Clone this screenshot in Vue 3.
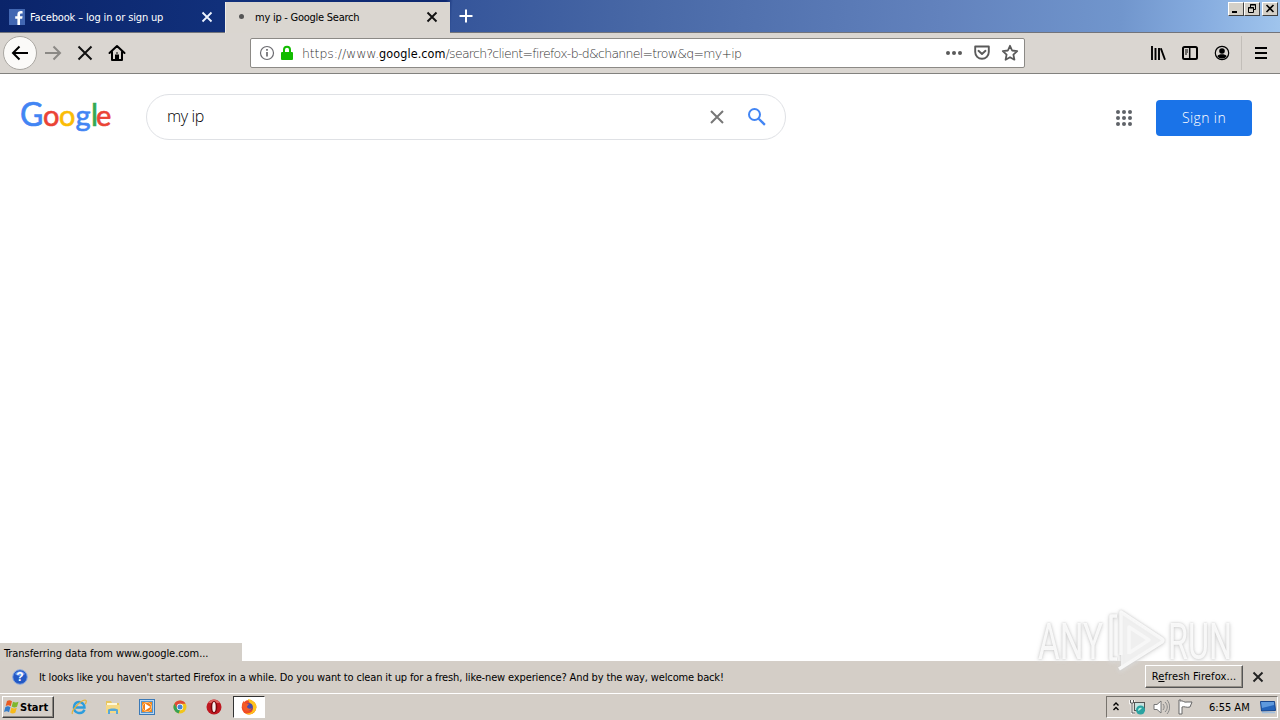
<script setup>
import { ref } from 'vue'

const query = ref('my ip')
const dots = [3, 9, 15]
</script>

<template>
    <div class="desktop">
        <header class="titlebar">
            <div class="tab">
                <svg class="favicon" width="16" height="16" viewBox="0 0 16 16">
                    <rect width="16" height="16" fill="#4267b2" />
                    <path d="M11 16V9.7h2.2l.4-2.4H11V6c0-.9.4-1.4 1.4-1.4h1.2V2.3C11 1.8 8.4 2.2 8.4 5.5v1.8H6.2v2.4h2.2V16z" fill="#fff" />
                </svg>
                <span class="tab-title">Facebook – log in or sign up</span>
                <svg class="close" width="12" height="12" viewBox="0 0 12 12"><path d="M1.5 1.5l9 9m0-9l-9 9" stroke="#eef4ff" stroke-width="1.8" /></svg>
            </div>
            <div class="tab active">
                <i class="loading"></i>
                <span class="tab-title">my ip - Google Search</span>
                <svg class="close" width="12" height="12" viewBox="0 0 12 12"><path d="M1.5 1.5l9 9m0-9l-9 9" stroke="#111" stroke-width="1.9" /></svg>
            </div>
            <svg class="new-tab" width="16" height="16" viewBox="0 0 16 16"><path d="M8 1.5v13M1.5 8h13" stroke="#fff" stroke-width="2" /></svg>
            <div class="window-buttons">
                <button><svg width="14" height="12"><path d="M3 9h5" stroke="#000" stroke-width="2" /></svg></button>
                <button><svg width="14" height="12"><path d="M5.5 4V1.5h5v5H9M5 2h6M3.500 4.500h5v5h-5zM3 5h6" fill="none" stroke="#000" /></svg></button>
                <button class="x"><svg width="14" height="12"><path d="M3.5 2l7 7m0-7l-7 7" stroke="#000" stroke-width="1.6" /></svg></button>
            </div>
        </header>

        <nav class="toolbar">
            <div class="back">
                <svg width="18" height="18" viewBox="0 0 18 18"><path d="M17 9H2m6.5-6.5L2 9l6.5 6.5" fill="none" stroke="#000" stroke-width="2" /></svg>
            </div>
            <svg class="forward" width="18" height="18" viewBox="0 0 18 18"><path d="M1 9h15M9.5 2.5L16 9l-6.5 6.5" fill="none" stroke="#8b8985" stroke-width="2" /></svg>
            <svg class="stop" width="16" height="16" viewBox="0 0 16 16"><path d="M1.5 1.5l13 13m0-13l-13 13" stroke="#111" stroke-width="2" /></svg>
            <svg class="home" width="18" height="18" viewBox="0 0 18 18">
                <path d="M1.5 9L9 2l7.5 7M4 7.500V16h10V7.500" fill="none" stroke="#000" stroke-width="2" stroke-linejoin="round" stroke-linecap="round" />
                <path d="M7 16v-5.500h4V16z" />
                <path d="M9 8.500v1" stroke="#000" stroke-width="2" />
            </svg>
            <div class="urlbar">
                <svg class="info" width="16" height="16" viewBox="0 0 16 16">
                    <circle cx="8" cy="8" r="6.5" fill="none" stroke="#6b6b70" stroke-width="1.2" />
                    <path d="M8 7v4.500M8 4v1.800" stroke="#6b6b70" stroke-width="1.7" />
                </svg>
                <svg class="lock" width="14" height="16" viewBox="0 0 14 16">
                    <path d="M4 8V4.800a3 3 0 016 0V8" fill="none" stroke="#12bc00" stroke-width="2" />
                    <rect x="1" y="7" width="12" height="8" rx="1" fill="#12bc00" />
                </svg>
                <span class="url"><span class="host">https://www.</span><b>google.com</b>/search?client=firefox-b-d&amp;channel=trow&amp;q=my+ip</span>
                <svg class="more" width="18" height="6"><circle cx="3" cy="3" r="2" /><circle cx="9" cy="3" r="2" /><circle cx="15" cy="3" r="2" /></svg>
                <svg class="pocket" width="18" height="18" viewBox="0 0 18 18"><path d="M2.200 2.500h13.600V8a6.800 6.800 0 01-13.600 0zM5.500 6.800L9 10l3.500-3.200" fill="none" stroke="#5a5a5a" stroke-width="1.9" stroke-linejoin="round" stroke-linecap="round" /></svg>
                <svg class="star" width="18" height="18" viewBox="0 0 18 18"><path d="M9 1.800l2.100 4.700 5.100.6-3.800 3.500 1 5.100L9 13.200l-4.400 2.500 1-5.100-3.800-3.500 5.100-.6z" fill="none" stroke="#5a5a5a" stroke-width="1.8" stroke-linejoin="round" /></svg>
            </div>
            <div class="tools">
                <svg width="16" height="16" viewBox="0 0 16 16"><path d="M2 1v14M5.500 3v12M9 3v12" stroke="#000" stroke-width="1.9" /><path d="M10.800 3.200L15 14.800" stroke="#000" stroke-width="1.9" /></svg>
                <svg width="16" height="16" viewBox="0 0 16 16"><rect x="1" y="2" width="14" height="12" rx="1.5" fill="none" stroke="#000" stroke-width="2" /><path d="M7.700 2v12" stroke="#000" stroke-width="1.5" /><path d="M3 5h3M3 7h3M3 9h2" stroke="#000" /></svg>
                <svg width="16" height="16" viewBox="0 0 16 16"><circle cx="8" cy="8" r="6.7" fill="none" stroke="#000" stroke-width="1.2" /><circle cx="8" cy="6" r="2.8" /><path d="M3.300 11.200c1.500-2.500 7.900-2.500 9.400 0A5.500 5.500 0 018 13.500a5.500 5.500 0 01-4.700-2.300z" /></svg>
            </div>
            <svg class="menu" width="12" height="14"><path d="M0 2h12M0 7h12M0 12h12" stroke="#000" stroke-width="2" /></svg>
        </nav>

        <main class="page">
            <div class="logo">
                <span class="blue cap">G</span><span class="red">o</span><span class="yellow">o</span><span class="blue g">g</span><span class="green">l</span><span class="red e">e</span>
            </div>
            <div class="searchbox">
                <span class="query">{{ query }}</span>
                <svg class="clear" width="16" height="16" viewBox="0 0 16 16"><path d="M2 2l12 12m0-12L2 14" stroke="#777" stroke-width="2" /></svg>
                <svg class="magnifier" width="20" height="20" viewBox="0 0 20 20"><circle cx="7.5" cy="7.5" r="5.5" fill="none" stroke="#4285f4" stroke-width="2" /><path d="M11.700 11.700l6.200 6.200" stroke="#4285f4" stroke-width="2.3" /></svg>
            </div>
            <svg class="apps" width="18" height="18">
                <template v-for="y in dots" :key="y">
                    <circle v-for="x in dots" :key="x" :cx="x" :cy="y" r="2" fill="#5f6368" />
                </template>
            </svg>
            <button class="signin"><span>Sign in</span></button>
        </main>

        <div class="status"><span>Transferring data from www.google.com...</span></div>

        <div class="notification">
            <svg class="help" width="16" height="16" viewBox="0 0 16 16">
                <circle cx="8" cy="8" r="7.3" fill="#2459c5" stroke="#8aa9df" />
                <path d="M3 5a6 6 0 0110 0c-2 2-7 3-10 0z" fill="#6d9af0" />
                <text x="8" y="12" text-anchor="middle" fill="#fff">?</text>
            </svg>
            <span class="message">It looks like you haven't started Firefox in a while. Do you want to clean it up for a fresh, like-new experience? And by the way, welcome back!</span>
            <button class="refresh"><span>R<u>e</u>fresh Firefox...</span></button>
            <svg class="dismiss" width="12" height="12" viewBox="0 0 12 12"><path d="M1.500 1.500l9 9m0-9l-9 9" stroke="#222" stroke-width="1.9" /></svg>
        </div>

        <footer class="taskbar">
            <button class="start">
                <svg width="16" height="16" viewBox="0 0 16 16">
                    <path d="M3 2c2-1 3-1 5 .3L6.700 7.200C5 6 3.700 6 1.700 7z" fill="#ea5b20" />
                    <path d="M9 2.700c2 1.100 3.500 1 5.500 0L13 7.700c-2 1-3.500.9-5.300-.2z" fill="#7fb72d" />
                    <path d="M1.400 8c2-1 3.300-.9 5 .3L5 13.200C3.400 12 2 12 0 13z" fill="#347cc9" />
                    <path d="M7.400 8.600c1.800 1.100 3.400 1.200 5.400.2l-1.500 4.900c-2 1-3.500.9-5.200-.2z" fill="#f7ba19" />
                </svg>
                <span>Start</span>
            </button>
            <div class="launcher">
                <svg viewBox="0 0 16 16">
                    <path d="M13.500 10.700A5.500 5.500 0 118 3a5.400 5.400 0 015.500 5.500H4.500" fill="none" stroke="#2c9ddd" stroke-width="2.4" />
                    <path d="M1.500 15C-.5 12.500 9 1.500 14 1c2.200 0 1 3 .2 4.300" fill="none" stroke="#e4b23a" stroke-width="1.2" />
                </svg>
                <svg viewBox="0 0 16 16">
                    <path d="M1 2h5l1 2h7v9H1z" fill="#e8c65e" /><path d="M2 4h10v5H2z" fill="#fff8d8" />
                    <path d="M1 6h14v8H1z" fill="#f5d986" /><path d="M3 15v-4c0-2 10-2 10 0v4h-2v-3H5v3z" fill="#58a8d8" />
                </svg>
                <svg viewBox="0 0 16 16">
                    <rect x=".5" y=".5" width="15" height="15" fill="#b9d7f2" stroke="#3b79b6" />
                    <rect x="2.5" y="2.5" width="11" height="11" fill="#f68b1d" stroke="#5795cc" /><circle cx="8" cy="8" r="4.500" fill="#f37b12" stroke="#ffc785" /><path d="M6 4.500l5.500 3.500L6 11.500z" fill="#fff" />
                </svg>
                <svg viewBox="0 0 16 16">
                    <circle cx="8" cy="8" r="6.5" fill="#f1c51b" />
                    <path d="M2.400 4.700A6.500 6.500 0 0113.600 4.700H8L5 9.700z" fill="#df4938" />
                    <path d="M2.400 4.700l3 5 2.600 1.500-1.500 3.200A6.500 6.500 0 012.400 4.700z" fill="#36a154" />
                    <circle cx="8" cy="8" r="3.2" fill="#fff" /><circle cx="8" cy="8" r="2.5" fill="#4285d4" />
                </svg>
                <svg viewBox="0 0 16 16"><circle cx="8" cy="8" r="7.5" fill="#bf1720" /><path d="M2 4a7 7 0 0112 0" fill="#de6260" /><ellipse cx="8" cy="8" rx="3.3" ry="6" fill="#78060b" /><ellipse cx="8" cy="8" rx="1.7" ry="5" fill="#f5eeee" /></svg>
            </div>
            <div class="running">
                <svg width="16" height="16" viewBox="0 0 16 16">
                    <circle cx="8" cy="8.3" r="7.3" fill="#f14b23" />
                    <path d="M7 0c3 .5 8.500 3 8.500 8A7.500 7.500 0 014 14.300c5 1 8-1.500 8-5C12 5 8 5 7 0z" fill="#ffc31d" />
                    <circle cx="8" cy="8" r="3.8" fill="#484dac" />
                    <path d="M1 5L2.500 2l2 2.500L8 5 6 7.500c0 2 3 2.800 5 1.500-1 3-5 4-7.500 2S1 6.500 1 5z" fill="#f45a25" />
                </svg>
            </div>
            <div class="tray">
                <svg class="chevrons" width="8" height="12"><path d="M1.500 4.500L4 2l2.500 2.500M1.500 9L4 6.500 6.500 9" fill="none" stroke="#000" stroke-width="1.4" /></svg>
                <svg class="network" width="17" height="16" viewBox="0 0 17 16">
                    <path d="M1.500 1v3h3V1M3 4v10h3" fill="none" stroke="#fff" stroke-width="2.5" /><path d="M1.500 1v3h3V1M3 4v10h3" fill="none" stroke="#555" />
                    <rect x="5.5" y="3.5" width="10" height="8" fill="#c8e3e1" stroke="#555" />
                    <circle cx="11.5" cy="11" r="4.5" fill="#2ba3a1" /><path d="M9 12c0-3 2-4 4-3l-2 2z" fill="#b5eee4" />
                </svg>
                <svg class="speaker" width="17" height="16" viewBox="0 0 17 16"><path d="M1 5.500h3L8 2v12l-4-3.500H1z" fill="#fff" stroke="#777" /><path d="M10 5c1.500 2 1.500 4 0 6m2-8c3 3 3 7 0 10m2-12c3.500 4 3.500 10 0 14" fill="none" stroke="#888" /></svg>
                <svg class="flag" width="17" height="16" viewBox="0 0 17 16"><path d="M3 2c3-1 4 2 7 1h5l-2 5c-3 1-6-1-8 0v7H2V1h2" fill="#fff" stroke="#666" /></svg>
                <time>6:55 AM</time>
                <svg class="show-desktop" width="16" height="14" viewBox="0 0 16 14"><path d="M.5 1.500h14l1 9-14 .5z" fill="#2464bb" stroke="#17458c" /><path d="M1 2h13v3L2 8z" fill="#5e99dd" /><path d="M2 12.500h13" stroke="#a0bedc" stroke-width="1.500" /></svg>
            </div>
        </footer>

        <svg class="watermark" width="204" height="68" viewBox="0 0 204 68">
            <g class="letters">
                <text x="3" y="52" textLength="65" lengthAdjust="spacingAndGlyphs">ANY</text>
                <text x="133" y="52" textLength="64" lengthAdjust="spacingAndGlyphs">RUN</text>
            </g>
            <g class="mark">
                <path class="panel" d="M86 6l42 27-42 29z" />
                <path d="M82 9h-6v43h6M94 47V20l20 13-20 13" />
                <path d="M86 48V5l41 27q2 1 0 3L84 62" />
            </g>
        </svg>
    </div>
</template>

<style>
body {
    margin: 0;
    overflow: hidden;
}
</style>

<style scoped>
.desktop {
    position: relative;
    width: 1280px;
    height: 720px;
    display: flex;
    flex-direction: column;
    overflow: hidden;
    background: #fff;
    color: #000;
    font-family: "DejaVu Sans Condensed", "DejaVu Sans", sans-serif;
    font-stretch: condensed;
    font-size: 11px;
    white-space: nowrap;
}

.desktop * {
    box-sizing: border-box;
}

svg {
    display: block;
    flex: none;
}

button {
    padding: 0;
    font: inherit;
    color: inherit;
}

.titlebar {
    height: 33px;
    flex: none;
    display: flex;
    background: linear-gradient(94deg, #0a246a 0, #11307b 220px, #0d2870 445px, #35559a 452px, #4868a6 640px, #6282bd 940px, #7196cd 1120px, #86acdf 1200px, #a0c5ed 1280px);
    border-bottom: 1px solid #72747b;
}

.tab {
    width: 225px;
    height: 33px;
    display: flex;
    align-items: center;
    padding-left: 9px;
    color: #fff;
}

.active {
    height: 31px;
    margin-top: 2px;
    padding: 0 0 2px 13px;
    background: #dad6d0;
    border-left: 1px solid #efece7;
    color: #000;
}

.tab-title {
    width: 171px;
    margin-left: 5px;
    padding-top: 1px;
    letter-spacing: -.15px;
}

.loading {
    width: 5px;
    height: 5px;
    margin-right: 6px;
    border-radius: 50%;
    background: #555;
}

.active .tab-title {
    letter-spacing: -.25px;
}

.new-tab {
    margin: 8px 0 0 8px;
}

.window-buttons {
    display: flex;
    margin: 2px 2px 0 auto;
}

.window-buttons button {
    width: 16px;
    height: 14px;
    border: 1px solid;
    border-color: #fff #404040 #404040 #fff;
    background: #d4d0c8;
}

.window-buttons .x {
    margin-left: 2px;
}

.toolbar {
    height: 41px;
    flex: none;
    display: flex;
    align-items: center;
    padding: 0 13px 0 3px;
    background: #dad6d1;
    border-bottom: 1px solid #82817e;
}

.back {
    width: 34px;
    height: 34px;
    display: grid;
    place-items: center;
    border: 1px solid #aaa7a2;
    border-radius: 50%;
    background: #fbfaf8;
}

.forward {
    margin-left: 7px;
}

.stop {
    margin-left: 15px;
}

.home {
    margin-left: 15px;
}

.urlbar {
    width: 775px;
    height: 30px;
    display: flex;
    align-items: center;
    margin-left: 124px;
    padding: 0 5px 0 8px;
    border: 1px solid #8c8a86;
    border-radius: 2px;
    background: #fff;
}

.lock {
    margin-left: 5px;
}

.url {
    width: 643px;
    margin-left: 8px;
    padding-top: 1px;
    color: #333;
    font-family: "DejaVu Sans Light", "DejaVu Sans ExtraLight", "DejaVu Sans", sans-serif;
    font-size: 12.5px;
    font-weight: 200;
    letter-spacing: -.7px;
}

.host {
    letter-spacing: -.1px;
}

.url b {
    color: #000;
    font-family: "DejaVu Sans Condensed", "DejaVu Sans", sans-serif;
    font-weight: 400;
    letter-spacing: .08px;
}

.more {
    fill: #5a5a5a;
}

.pocket {
    margin-left: 10px;
}

.star {
    margin-left: 10px;
}

.tools {
    display: flex;
    gap: 16px;
    margin-left: 125px;
    padding-right: 11px;
    height: 34px;
    align-items: center;
    border-right: 1px solid #c2beb9;
}

.menu {
    margin-left: 13px;
}

.page {
    flex: 1;
    display: flex;
    align-items: flex-start;
    padding: 20px 28px 0 20px;
}

.logo {
    width: 94px;
    height: 42px;
    display: flex;
    align-items: baseline;
    font: 400 29px/40px Lato, sans-serif;
    -webkit-text-stroke: .6px;
}

.logo span {
    flex: none;
    width: 16px;
    text-align: center;
}

.logo .cap {
    width: 23px;
    font-size: 32px;
}

.logo .green {
    width: 5px;
    font-size: 30px;
}

.logo .e {
    width: 15px;
}

.blue {
    color: #4285f4;
}

.red {
    color: #ea4335;
}

.yellow {
    color: #fbbc05;
}

.green {
    color: #34a853;
}

.searchbox {
    width: 640px;
    height: 46px;
    display: flex;
    align-items: center;
    margin-left: 32px;
    padding: 0 18px 0 20px;
    border: 1px solid #dfe1e5;
    border-radius: 23px;
}

.query {
    margin-top: -2px;
    font: 300 16px "Open Sans", sans-serif;
    letter-spacing: -.4px;
}

.clear {
    margin-left: auto;
}

.magnifier {
    margin-left: 22px;
}

.apps {
    margin: 15px 23px 0 auto;
}

.signin {
    width: 96px;
    height: 36px;
    margin-top: 6px;
    padding-bottom: 2px;
    border: 0;
    border-radius: 4px;
    background: #1a73e8;
    color: #fff;
    font: 300 14px "Open Sans", sans-serif;
    letter-spacing: .4px;
}

.status {
    width: 242px;
    height: 18px;
    flex: none;
    padding: 4px 0 0 4px;
    background: #d4cfc8;
    letter-spacing: -.07px;
}

.notification {
    height: 32px;
    flex: none;
    display: flex;
    align-items: center;
    padding: 0 16px 0 12px;
    background: #d4cec7;
}

.help text {
    font: bold 12px "Liberation Sans", sans-serif;
}

.message {
    margin-left: 11px;
    letter-spacing: -.14px;
}

.refresh {
    width: 98px;
    height: 23px;
    margin: -2px 9px 0 auto;
    border: 1px solid;
    border-color: #fff #555 #555 #fff;
    box-shadow: inset -1px -1px #969189;
    background: #d4cfc8;
    letter-spacing: .1px;
}

.taskbar {
    height: 27px;
    flex: none;
    display: flex;
    padding: 2px;
    border-top: 1px solid #fff;
    background: #d4cec7;
}

.start {
    width: 52px;
    height: 22px;
    display: flex;
    align-items: center;
    padding-left: 1px;
    border: 1px solid;
    border-color: #fff #404040 #404040 #fff;
    box-shadow: inset -1px -1px #8b8780;
    background: #d4cec7;
    font-weight: bold;
}

.launcher {
    display: flex;
    align-items: center;
    gap: 17.75px;
    margin-left: 17px;
}

.launcher svg {
    width: 16px;
    height: 16px;
}

.running {
    width: 32px;
    height: 22px;
    display: grid;
    place-items: center;
    margin-left: 11px;
    border: 1px solid;
    border-color: #333 #fff #fff #333;
    background: #fff;
}

.tray {
    width: 172px;
    height: 22px;
    display: flex;
    align-items: center;
    margin-left: auto;
    padding-left: 5px;
    border: 1px solid;
    border-color: #77736d #fff #fff #77736d;
}

.network {
    margin-left: 9px;
}

.speaker,
.flag {
    margin-left: 7px;
}

time {
    width: 42px;
    margin-left: 15px;
}

.show-desktop {
    margin-left: 9px;
}

.watermark {
    position: absolute;
    left: 1035px;
    top: 607px;
    overflow: visible;
    filter: drop-shadow(0 0 1px #c4c4c4) drop-shadow(0 1px 2px #ddd);
}

.letters {
    font: 400 50px Roboto, sans-serif;
    fill: #fff;
    opacity: .85;
}

.mark {
    fill: none;
    stroke: #fff;
    stroke-width: 3.5px;
    stroke-linejoin: round;
    opacity: .85;
}

.panel {
    fill: #f6f6f6;
    stroke: none;
}
</style>
